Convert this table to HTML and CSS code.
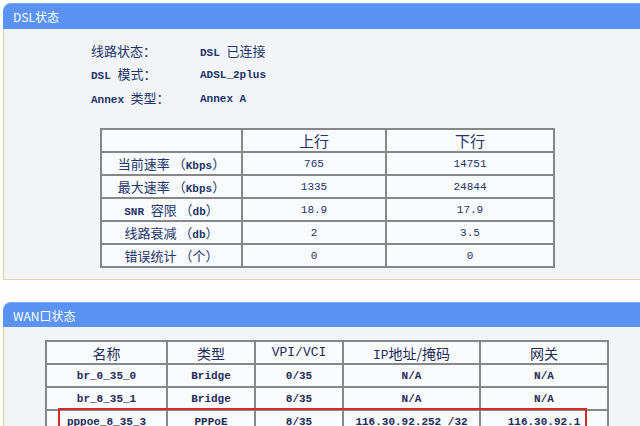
FILE: index.html
```html
<!DOCTYPE html>
<html lang="zh-CN">
<head>
<meta charset="utf-8">
<title>DSL状态</title>
<link rel="stylesheet" href="styles.css">
</head>
<body>
<section class="panel dsl">
  <div class="bar">DSL状态</div>
  <div class="body">
    <div class="info">
      <div class="k"><span class="z">线路状态：</span></div>
      <div class="v">DSL <span class="z">已连接</span></div>
      <div class="k">DSL <span class="z">模式：</span></div>
      <div class="v">ADSL_2plus</div>
      <div class="k">Annex <span class="z">类型：</span></div>
      <div class="v">Annex A</div>
    </div>
    <table class="grid dslt">
      <colgroup><col class="c1"><col class="c2"><col class="c3"></colgroup>
      <tr class="head"><th></th><th>上行</th><th>下行</th></tr>
      <tr><td class="lbl"><span class="z">当前速率 （</span>Kbps<span class="z">）</span></td><td>765</td><td>14751</td></tr>
      <tr><td class="lbl"><span class="z">最大速率 （</span>Kbps<span class="z">）</span></td><td>1335</td><td>24844</td></tr>
      <tr><td class="lbl">SNR <span class="z">容限 （</span>db<span class="z">）</span></td><td>18.9</td><td>17.9</td></tr>
      <tr><td class="lbl"><span class="z">线路衰减 （</span>db<span class="z">）</span></td><td>2</td><td>3.5</td></tr>
      <tr><td class="lbl"><span class="z">错误统计 （个）</span></td><td>0</td><td>0</td></tr>
    </table>
  </div>
</section>

<section class="panel wan">
  <div class="bar">WAN口状态</div>
  <div class="body">
    <div class="wrap">
      <table class="grid want">
        <colgroup><col class="w1"><col class="w2"><col class="w3"><col class="w4"><col class="w5"></colgroup>
        <tr class="head"><th>名称</th><th>类型</th><th class="m">VPI/VCI</th><th><span class="m">IP</span>地址/掩码</th><th>网关</th></tr>
        <tr><td>br_0_35_0</td><td>Bridge</td><td>0/35</td><td>N/A</td><td>N/A</td></tr>
        <tr><td>br_8_35_1</td><td>Bridge</td><td>8/35</td><td>N/A</td><td>N/A</td></tr>
        <tr><td>pppoe_8_35_3</td><td>PPPoE</td><td>8/35</td><td>116.30.92.252 /32</td><td>116.30.92.1</td></tr>
      </table>
      <div class="mark"></div>
    </div>
  </div>
</section>
</body>
</html>
```

FILE: styles.css
```css
html, body {
  margin: 0;
}
body {
  width: 640px;
  height: 426px;
  box-sizing: border-box;
  padding: 3px 0 0 3px;
  overflow: hidden;
  background: #fdfdfe;
  font-family: "Liberation Mono", "Noto Sans CJK SC", monospace;
  font-size: 11px;
  color: #22356a;
}
.z {
  font-family: "Noto Sans CJK SC", sans-serif;
  font-size: 13px;
}
.panel {
  width: 680px;
}
.bar {
  height: 26px;
  line-height: 26px;
  background: #5a93f4;
  border-top: 1px solid #7aa8f7;
  box-sizing: border-box;
  border-radius: 8px 0 0 0;
  color: #fff;
  font-family: "Noto Sans CJK SC", sans-serif;
  font-size: 12px;
  padding-left: 10px;
}
.body {
  background: #f3f4f8;
  border-left: 1px solid #e3d0ab;
  border-bottom: 1px solid #e3d0ab;
  box-sizing: border-box;
}
.dsl .body {
  height: 251px;
  padding-top: 11px;
}
.info {
  display: grid;
  grid-template-columns: 109px auto;
  grid-auto-rows: 23.5px;
  align-items: center;
  margin-left: 87px;
  line-height: 16px;
  height: 72px;
  font-weight: bold;
}
.info .z {
  font-weight: normal;
}
.grid {
  border-collapse: collapse;
  background: #f9fafb;
  table-layout: fixed;
}
.grid th, .grid td {
  border: 2px solid #858789;
  text-align: center;
  padding: 0;
}
.grid th {
  font-family: "Noto Sans CJK SC", sans-serif;
  font-weight: normal;
  font-size: 15px;
}
.grid tr {
  height: 23px;
}
.dslt {
  margin: 16px 0 0 96px;
  width: 453px;
}
.c1 { width: 141px; }
.c2 { width: 144px; }
.c3 { width: 168px; }
.lbl {
  white-space: nowrap;
  font-weight: bold;
}
.lbl .z {
  font-weight: normal;
}
.wan {
  margin-top: 22px;
}
.wan .bar {
  height: 25px;
  line-height: 25px;
}
.wan .body {
  height: 120px;
  padding-top: 13px;
}
.wrap {
  position: relative;
  margin-left: 41px;
  width: 562px;
}
.want {
  width: 562px;
  color: #1e2c5a;
}
.want th {
  font-size: 14px;
}
.want td {
  font-weight: bold;
}
.want th .m, .want th.m {
  font-family: "Liberation Mono", monospace;
  font-size: 13px;
}
.w1 { width: 121px; }
.w2 { width: 88px; }
.w3 { width: 88px; }
.w4 { width: 137px; }
.w5 { width: 128px; }
.mark {
  position: absolute;
  left: 13px;
  top: 68px;
  width: 529px;
  height: 40px;
  border: 2px solid #d42a2a;
  box-sizing: border-box;
}
```
